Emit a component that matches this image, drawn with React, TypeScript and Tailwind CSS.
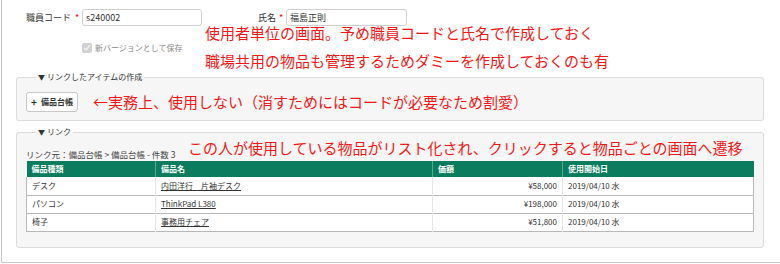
import { useState } from "react";

const rows = [
  { kind: "デスク", name: "内田洋行　片袖デスク", price: "¥58,000", date: "2019/04/10 水" },
  { kind: "パソコン", name: "ThinkPad L380", price: "¥198,000", date: "2019/04/10 水" },
  { kind: "椅子", name: "事務用チェア", price: "¥51,800", date: "2019/04/10 水" },
];

export default function App() {
  const [code, setCode] = useState("s240002");
  const [name, setName] = useState("福島正則");

  return (
    <div className="w-[780px] h-[264px] bg-white text-[#333] font-['Noto_Sans_CJK_JP','Noto_Sans',sans-serif]">
      <div className="ml-[1px] h-[263px] border-l border-b border-[#c8c8c8] pl-[14px] pr-[16px]">
        {/* 職員コード / 氏名 */}
        <div className="flex items-center pt-[9px] text-[9px]">
          <span className="w-[55px] text-right whitespace-nowrap leading-[12px]">職員コード</span>
          <span className="ml-[4px] w-[4px] text-[#e00] leading-[12px]">*</span>
          <input
            value={code}
            onChange={e => setCode(e.target.value)}
            className="ml-[3px] w-[120px] h-[17px] px-[3px] rounded-[3px] border border-[#d0d0d0] bg-white text-[9px] text-[#333] outline-none"
          />
          <span className="ml-[56px] whitespace-nowrap leading-[12px]">氏名</span>
          <span className="ml-[3px] w-[4px] text-[#e00] leading-[12px]">*</span>
          <input
            value={name}
            onChange={e => setName(e.target.value)}
            className="ml-[3px] w-[121px] h-[17px] px-[3px] rounded-[3px] border border-[#d0d0d0] bg-white text-[9px] text-[#333] outline-none"
          />
        </div>

        {/* チェックボックス + 注記 */}
        <div className="flex items-center">
          <label className="w-[189px] flex items-center pl-[66px] mt-[2px] text-[8px] text-[#888] whitespace-nowrap">
            <input type="checkbox" checked disabled readOnly className="w-[10px] h-[10px] m-0 accent-[#bbb]" />
            <span className="ml-[3px]">新バージョンとして保存</span>
          </label>
          <div className="flex flex-col gap-[14px] text-[15px] leading-[14px] text-[#f51616] whitespace-nowrap">
            <p>使用者単位の画面。予め職員コードと氏名で作成しておく</p>
            <p>職場共用の物品も管理するためダミーを作成しておくのも有</p>
          </div>
        </div>

        {/* リンクしたアイテムの作成 */}
        <fieldset className="mt-[3px] rounded-[3px] border border-[#dcdcdc] bg-[#f6f6f6] px-[9px] pt-[9px] pb-[8px]">
          <legend className="ml-[10px] px-[2px] text-[8px] leading-[12px] text-[#333]">
            <span className="text-[7px] mr-[2px]">▼</span>リンクしたアイテムの作成
          </legend>
          <div className="flex items-center">
            <button className="w-[52px] h-[20px] flex items-center justify-center gap-[4px] rounded-[3px] border border-[#c8c8c8] bg-white text-[8px] font-bold text-[#333]">
              <span className="text-[10px] leading-none">+</span>
              <span>備品台帳</span>
            </button>
            <span className="ml-[15px] text-[15px] leading-[20px] text-[#f51616] whitespace-nowrap">
              ←実務上、使用しない（消すためにはコードが必要なため割愛）
            </span>
          </div>
        </fieldset>

        {/* リンク */}
        <fieldset className="mt-[5px] rounded-[3px] border border-[#dcdcdc] bg-[#f6f6f6] px-[9px] pb-[15px]">
          <legend className="ml-[10px] px-[2px] text-[8px] leading-[12px] text-[#333]">
            <span className="text-[7px] mr-[2px]">▼</span>リンク
          </legend>
          <div className="flex items-end">
            <span className="w-[146px] text-[8.5px] leading-[12px] text-[#444] whitespace-nowrap">リンク元：備品台帳 &gt; 備品台帳 - 件数 3</span>
            <span className="ml-[16px] mb-[2px] text-[15px] leading-[20px] text-[#f51616] whitespace-nowrap">
              この人が使用している物品がリスト化され、クリックすると物品ごとの画面へ遷移
            </span>
          </div>
          <table className="mt-[1px] w-[727px] table-fixed border-collapse text-[8px]">
            <colgroup>
              <col className="w-[129px]" />
              <col className="w-[277px]" />
              <col className="w-[130px]" />
              <col className="w-[191px]" />
            </colgroup>
            <thead>
              <tr className="h-[16px] bg-[#0b7d5e] text-white font-bold text-left">
                <th className="pl-[5px] border-r border-[#5aa88f] font-bold">備品種類</th>
                <th className="pl-[5px] border-r border-[#5aa88f] font-bold">備品名</th>
                <th className="pl-[5px] border-r border-[#5aa88f] font-bold">価額</th>
                <th className="pl-[5px] font-bold">使用開始日</th>
              </tr>
            </thead>
            <tbody className="bg-white">
              {rows.map(r => (
                <tr key={r.kind} className="h-[18px] border-b border-x border-[#b8b8b8]">
                  <td className="pl-[5px] border-r border-[#e6e6e6]">{r.kind}</td>
                  <td className="pl-[5px] border-r border-[#e6e6e6]">
                    <a href="#" className="underline text-[#333]">{r.name}</a>
                  </td>
                  <td className="pr-[5px] text-right border-r border-[#e6e6e6]">{r.price}</td>
                  <td className="pl-[5px]">{r.date}</td>
                </tr>
              ))}
            </tbody>
          </table>
        </fieldset>
      </div>
    </div>
  );
}
